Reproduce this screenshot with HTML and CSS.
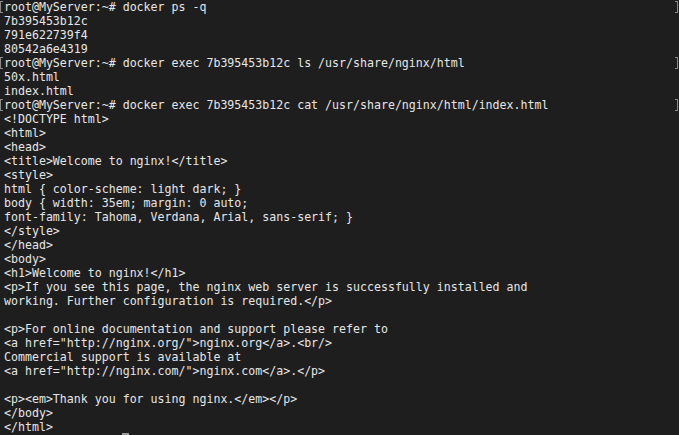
FILE: index.html
```html
<!DOCTYPE html>
<html>
<head>
<meta charset="utf-8">
<link rel="stylesheet" href="styles.css">
</head>
<body>
<div class="term">
<div class="line prompt"><span class="mark l"></span><span class="txt">root@MyServer:~# docker ps -q</span><span class="mark r"></span></div>
<div class="line"><span class="txt">7b395453b12c</span></div>
<div class="line"><span class="txt">791e622739f4</span></div>
<div class="line"><span class="txt">80542a6e4319</span></div>
<div class="line prompt"><span class="mark l"></span><span class="txt">root@MyServer:~# docker exec 7b395453b12c ls /usr/share/nginx/html</span><span class="mark r"></span></div>
<div class="line"><span class="txt">50x.html</span></div>
<div class="line"><span class="txt">index.html</span></div>
<div class="line prompt"><span class="mark l"></span><span class="txt">root@MyServer:~# docker exec 7b395453b12c cat /usr/share/nginx/html/index.html</span><span class="mark r"></span></div>
<div class="line"><span class="txt">&lt;!DOCTYPE html&gt;</span></div>
<div class="line"><span class="txt">&lt;html&gt;</span></div>
<div class="line"><span class="txt">&lt;head&gt;</span></div>
<div class="line"><span class="txt">&lt;title&gt;Welcome to nginx!&lt;/title&gt;</span></div>
<div class="line"><span class="txt">&lt;style&gt;</span></div>
<div class="line"><span class="txt">html { color-scheme: light dark; }</span></div>
<div class="line"><span class="txt">body { width: 35em; margin: 0 auto;</span></div>
<div class="line"><span class="txt">font-family: Tahoma, Verdana, Arial, sans-serif; }</span></div>
<div class="line"><span class="txt">&lt;/style&gt;</span></div>
<div class="line"><span class="txt">&lt;/head&gt;</span></div>
<div class="line"><span class="txt">&lt;body&gt;</span></div>
<div class="line"><span class="txt">&lt;h1&gt;Welcome to nginx!&lt;/h1&gt;</span></div>
<div class="line"><span class="txt">&lt;p&gt;If you see this page, the nginx web server is successfully installed and</span></div>
<div class="line"><span class="txt">working. Further configuration is required.&lt;/p&gt;</span></div>
<div class="line"><span class="txt"></span></div>
<div class="line"><span class="txt">&lt;p&gt;For online documentation and support please refer to</span></div>
<div class="line"><span class="txt">&lt;a href="http://nginx.org/"&gt;nginx.org&lt;/a&gt;.&lt;br/&gt;</span></div>
<div class="line"><span class="txt">Commercial support is available at</span></div>
<div class="line"><span class="txt">&lt;a href="http://nginx.com/"&gt;nginx.com&lt;/a&gt;.&lt;/p&gt;</span></div>
<div class="line"><span class="txt"></span></div>
<div class="line"><span class="txt">&lt;p&gt;&lt;em&gt;Thank you for using nginx.&lt;/em&gt;&lt;/p&gt;</span></div>
<div class="line"><span class="txt">&lt;/body&gt;</span></div>
<div class="line"><span class="txt">&lt;/html&gt;</span></div>
<div class="line"><span class="cursor"></span></div>
</div>
</body>
</html>
```
FILE: styles.css
```css
html, body {
  margin: 0;
  padding: 0;
  background: #1e1e1e;
  overflow: hidden;
}
.term {
  width: 679px;
  height: 435px;
  overflow: hidden;
  font-family: "DejaVu Sans Mono", monospace;
  font-size: 11.6px;
  color: #e6e6e6;
  background: #1e1e1e;
}
.line {
  display: flex;
  height: 14px;
  line-height: 14px;
  padding-left: 4px;
  white-space: pre;
}
.line.prompt {
  padding-left: 0;
}
.mark {
  flex: none;
  box-sizing: border-box;
  width: 3px;
  height: 12px;
  margin-top: 1px;
  border-top: 1px solid #8a8a8a;
  border-bottom: 1px solid #8a8a8a;
}
.mark.l {
  border-left: 1px solid #8a8a8a;
  margin-right: 1px;
}
.mark.r {
  margin-left: auto;
  margin-right: 1px;
  border-right: 1px solid #8a8a8a;
}
.txt {
  flex: none;
}
.cursor {
  flex: none;
  width: 7px;
  height: 12px;
  margin-left: 118px;
  margin-top: -1px;
  background: #9a9a9a;
}
```
